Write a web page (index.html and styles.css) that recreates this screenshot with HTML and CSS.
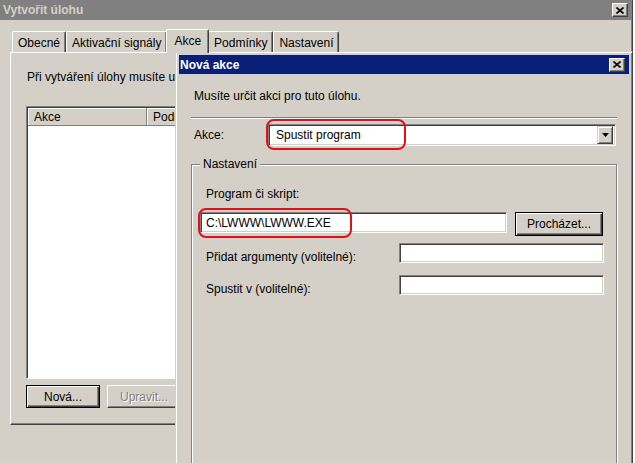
FILE: index.html
```html
<!DOCTYPE html>
<html lang="cs">
<head>
    <meta charset="UTF-8">
    <title>Vytvořit úlohu</title>
    <link rel="stylesheet" href="styles.css">
</head>
<body>

<div class="desktop">

    <!-- Main window: Vytvořit úlohu -->
    <div class="window main">
        <div class="titlebar">
            <span>Vytvořit úlohu</span>
            <span class="close">
                <svg width="8" height="7" viewBox="0 0 8 7"><path d="M0.5 0.5 L7.5 6.5 M7.5 0.5 L0.5 6.5" stroke="#000" stroke-width="1.6"/></svg>
            </span>
        </div>

        <div class="tabs">
            <div class="tab">Obecné</div>
            <div class="tab">Aktivační signály</div>
            <div class="tab active">Akce</div>
            <div class="tab">Podmínky</div>
            <div class="tab">Nastavení</div>
        </div>

        <div class="tab-panel">
            <p class="panel-intro">Při vytváření úlohy musíte určit alespoň jednu akci, která bude provedena při spuštění úlohy.</p>
            <div class="listview">
                <div class="list-header">
                    <div class="col col-action">Akce</div>
                    <div class="col">Podrobnosti</div>
                </div>
            </div>
            <div class="button-row">
                <button class="btn default">Nová...</button>
                <button class="btn" disabled>Upravit...</button>
                <button class="btn" disabled>Odstranit</button>
            </div>
        </div>
    </div>

    <!-- Dialog: Nová akce -->
    <div class="window dialog">
        <div class="titlebar">
            <span>Nová akce</span>
            <span class="close">
                <svg width="8" height="7" viewBox="0 0 8 7"><path d="M0.5 0.5 L7.5 6.5 M7.5 0.5 L0.5 6.5" stroke="#000" stroke-width="1.6"/></svg>
            </span>
        </div>

        <div class="dialog-body">
            <p class="dialog-intro">Musíte určit akci pro tuto úlohu.</p>
            <div class="separator"></div>

            <div class="field-row">
                <label class="field-label">Akce:</label>
                <div class="combo">
                    <span class="combo-value">Spustit program</span>
                    <span class="combo-btn">
                        <svg width="7" height="4" viewBox="0 0 7 4"><path d="M0 0 H7 L3.5 4 Z" fill="#000"/></svg>
                    </span>
                </div>
            </div>

            <div class="groupbox">
                <span class="group-title">Nastavení</span>
                <div class="group-content">
                    <p class="group-label">Program či skript:</p>
                    <div class="browse-row">
                        <div class="textbox program">C:\LWWW\LWWW.EXE</div>
                        <button class="btn default browse">Procházet...</button>
                    </div>
                    <div class="option-row">
                        <label class="option-label">Přidat argumenty (volitelné):</label>
                        <div class="textbox option"></div>
                    </div>
                    <div class="option-row second">
                        <label class="option-label">Spustit v (volitelné):</label>
                        <div class="textbox option"></div>
                    </div>
                </div>
            </div>
        </div>

        <!-- red annotation rings -->
        <span class="mark mark-action"></span>
        <span class="mark mark-program"></span>
    </div>

</div>

</body>
</html>
```

FILE: styles.css
```css
* {
    box-sizing: border-box;
}

body {
    margin: 0;
    background: #fff;
    font: 12px "Liberation Sans", Arial, sans-serif;
    color: #000;
    overflow: hidden;
}

p {
    margin: 0;
}

.desktop {
    position: relative;
    width: 635px;
    height: 463px;
    overflow: hidden;
}

.window {
    background: #d4d0c8;
}

/* title bars */
.titlebar {
    height: 20px;
    display: flex;
    align-items: center;
    justify-content: space-between;
    padding: 0 4px 0 3px;
    font-weight: bold;
    white-space: nowrap;
}

.main .titlebar {
    background: #808080;
    color: #d4d0c8;
}

.close {
    width: 16px;
    height: 14px;
    display: flex;
    align-items: center;
    justify-content: center;
    background: #d4d0c8;
    border: 1px solid;
    border-color: #fff #404040 #404040 #fff;
    box-shadow: inset -1px -1px #808080;
}

/* main window */
.main {
    width: 633px;
    height: 463px;
    border-right: 1px solid #404040;
    box-shadow: inset -1px 0 #808080;
}

.tabs {
    display: flex;
    align-items: flex-end;
    height: 23px;
    margin: 9px 0 0 12px;
    position: relative;
    z-index: 1;
}

.tab {
    height: 21px;
    padding: 4px 5px 0;
    line-height: 14px;
    white-space: nowrap;
    border: 1px solid;
    border-bottom: none;
    border-color: #fff #404040 transparent #fff;
    border-radius: 2px 2px 0 0;
    box-shadow: inset -1px 0 #808080;
}

.tab.active {
    height: 24px;
    margin: 0 -1px -1px -1px;
    padding: 4px 7px 0;
    background: #d4d0c8;
    position: relative;
    z-index: 2;
}

.tab-panel {
    width: 619px;
    height: 373px;
    margin-left: 10px;
    padding: 17px 15px 0 16px;
    border: 1px solid;
    border-color: #fff #404040 #404040 #fff;
    box-shadow: inset -1px -1px #808080;
}

.panel-intro {
    line-height: 14px;
    white-space: nowrap;
}

.listview {
    width: 590px;
    height: 273px;
    margin: 22px 0 0 -1px;
    background: #fff;
    border: 1px solid;
    border-color: #808080 #fff #fff #808080;
    box-shadow: inset 1px 1px #404040;
}

.list-header {
    display: flex;
    height: 18px;
    margin: 1px 0 0 1px;
}

.col {
    flex: 1;
    padding: 2px 6px 0;
    line-height: 14px;
    background: #d4d0c8;
    border-right: 1px solid #808080;
    border-bottom: 1px solid #808080;
    box-shadow: inset 1px 1px #fff;
}

.col.col-action {
    flex: 0 0 119px;
}

.button-row {
    display: flex;
    gap: 7px;
    margin: 6px 0 0 -1px;
}

/* buttons */
.btn {
    height: 23px;
    min-width: 74px;
    padding: 0 8px;
    font: inherit;
    color: #000;
    background: #d4d0c8;
    border: 1px solid;
    border-color: #fff #404040 #404040 #fff;
    box-shadow: inset -1px -1px #808080;
}

.btn.default {
    border-color: #000;
    box-shadow: inset 1px 1px #fff, inset -1px -1px #404040, inset -2px -2px #808080;
}

.btn:disabled {
    color: #808080;
    text-shadow: 1px 1px #fff;
}

/* dialog */
.dialog {
    position: absolute;
    left: 175px;
    top: 51px;
    width: 458px;
    height: 430px;
    padding: 3px;
    border: 1px solid;
    border-color: #d4d0c8 #404040 #404040 #d4d0c8;
    box-shadow: inset 1px 1px #fff, inset -1px -1px #808080;
}

.dialog .titlebar {
    height: 19px;
    padding-left: 1px;
    background: #0a1f78;
    color: #fff;
}

.dialog-body {
    padding: 0 12px;
}

.dialog-intro {
    margin: 15px 0 0 3px;
    line-height: 14px;
}

.separator {
    height: 2px;
    margin-top: 14px;
    border-top: 1px solid #808080;
    border-bottom: 1px solid #fff;
}

.field-row {
    display: flex;
    align-items: center;
    margin-top: 5px;
}

.field-label {
    width: 77px;
    padding-left: 3px;
}

.combo {
    flex: 1;
    height: 22px;
    margin-right: 1px;
    display: flex;
    align-items: center;
    justify-content: space-between;
    background: #fff;
    border: 1px solid;
    border-color: #808080 #fff #fff #808080;
    box-shadow: inset 1px 1px #404040, inset -1px -1px #d4d0c8;
    padding: 2px 2px 2px 7px;
}

.combo-btn {
    width: 16px;
    height: 18px;
    display: flex;
    align-items: center;
    justify-content: center;
    background: #d4d0c8;
    border: 1px solid;
    border-color: #d4d0c8 #404040 #404040 #d4d0c8;
    box-shadow: inset 1px 1px #fff, inset -1px -1px #808080;
}

.groupbox {
    height: 340px;
    margin-top: 18px;
    border: 1px solid #808080;
    box-shadow: inset 1px 1px #fff, 1px 1px #fff;
}

.group-title {
    display: block;
    width: max-content;
    margin: -8px 0 0 8px;
    padding: 0 3px;
    line-height: 14px;
    background: #d4d0c8;
}

.group-content {
    padding: 0 11px 0 8px;
}

.group-label {
    margin: 16px 0 0 6px;
    line-height: 14px;
}

.browse-row {
    display: flex;
    align-items: flex-start;
    gap: 8px;
    margin-top: 11px;
}

.textbox {
    height: 20px;
    padding: 2px 4px 0;
    line-height: 14px;
    white-space: nowrap;
    background: #fff;
    border: 1px solid;
    border-color: #808080 #fff #fff #808080;
    box-shadow: inset 1px 1px #404040, inset -1px -1px #d4d0c8;
}

.textbox.program {
    width: 307px;
    height: 21px;
    padding: 3px 4px 0 5px;
}

.btn.browse {
    width: 88px;
    height: 24px;
}

.option-row {
    display: flex;
    align-items: flex-start;
    margin-top: 7px;
}

.option-row.second {
    margin-top: 11px;
}

.option-label {
    width: 199px;
    margin-top: 7px;
    padding-left: 6px;
    line-height: 14px;
}

.textbox.option {
    width: 205px;
}

/* red annotation rings drawn on top of the screenshot */
.mark {
    position: absolute;
    border: 2px solid #e01018;
    border-radius: 8px;
}

.mark-action {
    left: 90px;
    top: 67px;
    width: 140px;
    height: 31px;
}

.mark-program {
    left: 22px;
    top: 156px;
    width: 154px;
    height: 30px;
}
```
